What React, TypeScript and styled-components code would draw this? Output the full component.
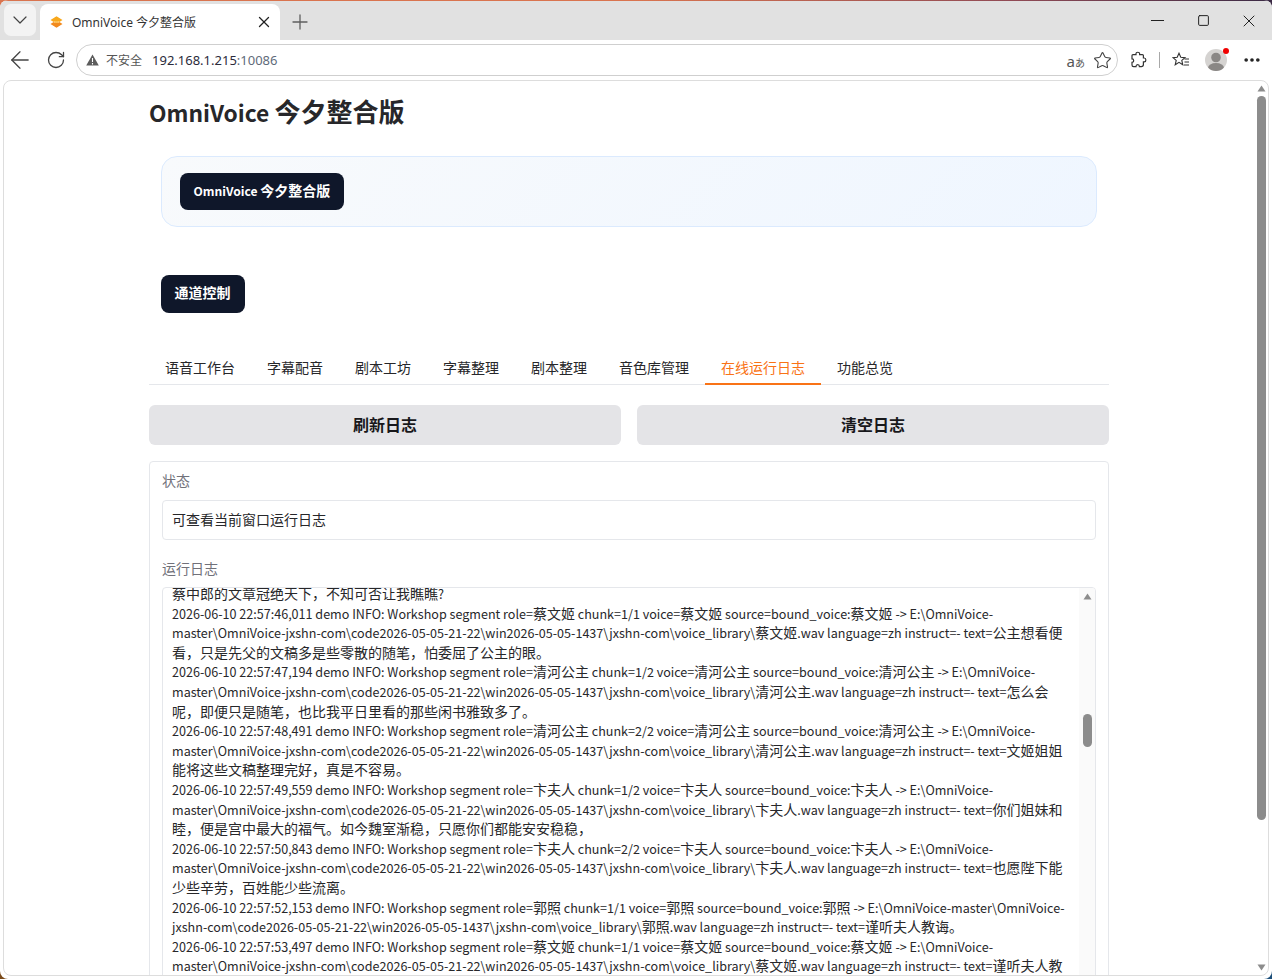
import { ReactNode } from 'react';
import { createGlobalStyle, styled } from 'styled-components';
import {
    ArrowLeft,
    ChevronDown,
    Minus,
    MoreHorizontal,
    Plus,
    RotateCw,
    Square,
    Star,
    X,
} from 'lucide-react';

const GlobalStyle = createGlobalStyle`
    html, body {
        margin: 0;
        padding: 0;
        height: 100%;
        overflow: hidden;
    }

    /* wallpaper that only shows at the rounded window corners */
    body {
        background: conic-gradient(#3b2a45 0 90deg, #1d4f7a 0 180deg, #7a4a1a 0 270deg, #d9744f 0);
    }

    * {
        box-sizing: border-box;
    }
`;

const UI_FONT = `"Noto Sans", "Noto Sans CJK SC", sans-serif`;
const PAGE_FONT = `"Noto Sans CJK SC", "Noto Sans", sans-serif`;

const Window = styled.div`
    display: flex;
    flex-direction: column;
    width: 1272px;
    height: 979px;
    overflow: hidden;
    border-radius: 8px;
    background: #ffffff;
    font-family: ${UI_FONT};
`;

const AccentLine = styled.div`
    height: 1px;
    flex: none;
    background: linear-gradient(90deg, #d9744f 0%, #d9744f 50%, #8f4a55 80%, #3b2a45 100%);
`;

const TitleBar = styled.div`
    display: flex;
    align-items: flex-end;
    flex: none;
    height: 39px;
    padding-left: 4px;
    background: #e1e1e1;
`;

const TabMenu = styled.div`
    display: flex;
    align-items: center;
    justify-content: center;
    width: 32px;
    height: 32px;
    margin-bottom: 4px;
    border-radius: 7px;
    background: #f3f3f3;
    color: #444444;
`;

const Tab = styled.div`
    display: flex;
    align-items: center;
    width: 240px;
    height: 36px;
    margin-left: 4px;
    padding: 0 7px 0 9px;
    border-radius: 8px 8px 0 0;
    background: #ffffff;
`;

const TabTitle = styled.span`
    flex: 1;
    margin-left: 8px;
    font-size: 12px;
    color: #333333;
    white-space: nowrap;
`;

const NewTab = styled.div`
    display: flex;
    align-items: center;
    justify-content: center;
    width: 40px;
    height: 36px;
    color: #5f5f5f;
`;

const WindowControls = styled.div`
    display: flex;
    margin-left: auto;
    align-self: stretch;
`;

const WindowButton = styled.div`
    display: flex;
    align-items: center;
    justify-content: center;
    width: 46px;
    color: #222222;
`;

const Toolbar = styled.div`
    display: flex;
    align-items: center;
    flex: none;
    height: 40px;
    background: #ffffff;
    color: #444444;
`;

const ToolButton = styled.div<{ $width: number }>`
    display: flex;
    align-items: center;
    justify-content: center;
    flex: none;
    width: ${(p) => p.$width}px;
    height: 32px;
`;

const AddressBar = styled.div`
    display: flex;
    align-items: center;
    flex: none;
    width: 1042px;
    height: 32px;
    margin-left: 4px;
    padding: 0 3px 0 9px;
    border: 1px solid #cfcfcf;
    border-radius: 16px;
`;

const SecurityLabel = styled.span`
    margin-left: 7px;
    font-size: 12px;
    color: #555555;
`;

const Url = styled.span`
    margin-left: 10px;
    font-size: 13px;
    color: #5f6b7a;
`;

const UrlHost = styled.span`
    color: #2b2b3b;
`;

const AddressActions = styled.div`
    display: flex;
    align-items: center;
    gap: 5px;
    margin-left: auto;
`;

const TranslateBadge = styled.span`
    display: flex;
    align-items: flex-end;
    height: 16px;
    color: #555555;
    font-size: 15px;
    line-height: 14px;
`;

const TranslateSmall = styled.span`
    font-size: 10px;
    line-height: 10px;
`;

const Divider = styled.div`
    flex: none;
    width: 1px;
    height: 16px;
    background: #a8a8a8;
`;

const Avatar = styled.div`
    position: relative;
    width: 22px;
    height: 22px;
`;

const AvatarDot = styled.span`
    position: absolute;
    top: -1px;
    right: -2px;
    width: 6px;
    height: 6px;
    border-radius: 50%;
    background: #f00000;
`;

const PageFrame = styled.div`
    display: flex;
    flex: none;
    height: 896px;
    margin: 0 3px 0 3px;
    border: 1px solid #dddddd;
    border-radius: 8px;
    overflow: hidden;
`;

const Viewport = styled.div`
    flex: 1;
    min-width: 0;
    overflow: hidden;
    font-family: ${PAGE_FONT};
`;

const Container = styled.main`
    width: 960px;
    margin: 0 auto;
`;

// the page's latin font is narrower than the latin glyphs of Noto Sans CJK
const Latin = styled.span<{ $scale: number }>`
    font-size: ${(p) => p.$scale}em;
    line-height: 1;
`;

const Heading = styled.h1`
    margin: 0;
    padding-top: 11px;
    height: 65px;
    font-size: 26px;
    line-height: 38px;
    font-weight: 600;
    color: #27272a;
`;

const HeroCard = styled.section`
    height: 71px;
    margin: 10px 12px 0;
    padding: 16px 18px;
    border: 1px solid #dbeafe;
    border-radius: 16px;
    background: linear-gradient(135deg, #f8fafc 0%, #eff6ff 100%);
`;

const DarkButton = styled.button<{ $height: number }>`
    display: block;
    height: ${(p) => p.$height}px;
    padding: 0 14px 3px 13.5px;
    border: 0;
    border-radius: 8px;
    background: #0f172a;
    color: #ffffff;
    font-family: ${PAGE_FONT};
    font-size: 14px;
    font-weight: 600;
`;

const ControlRow = styled.div`
    margin: 48px 12px 0;

    ${DarkButton} {
        padding-bottom: 5px;
    }
`;

const TabList = styled.nav`
    display: flex;
    height: 34px;
    margin-top: 38px;
    border-bottom: 1px solid #e5e7eb;
`;

const PageTab = styled.div<{ $active?: boolean }>`
    height: 34px;
    padding: 0 16px;
    font-size: 14px;
    line-height: 32px;
    white-space: nowrap;
    color: ${(p) => (p.$active ? '#f97316' : '#27272a')};
    border-bottom: 2px solid ${(p) => (p.$active ? '#f97316' : 'transparent')};
`;

const ActionRow = styled.div`
    display: grid;
    grid-template-columns: 1fr 1fr;
    gap: 16px;
    margin-top: 20px;
`;

const ActionButton = styled.button`
    height: 40px;
    padding: 0 0 2px;
    border: 0;
    border-radius: 6px;
    background: #e4e4e7;
    color: #18181b;
    font-family: ${PAGE_FONT};
    font-size: 16px;
    font-weight: 600;
`;

const Panel = styled.section`
    margin-top: 16px;
    padding: 0 12px;
    border: 1px solid #e5e7eb;
    border-radius: 4px;
`;

const FieldLabel = styled.div<{ $top: number }>`
    margin-top: ${(p) => p.$top}px;
    font-size: 14px;
    line-height: 20px;
    color: #71717a;
`;

const StatusBox = styled.div`
    height: 40px;
    margin-top: 10px;
    padding: 0 9px;
    border: 1px solid #e5e7eb;
    border-radius: 4px;
    font-size: 14px;
    line-height: 36px;
    color: #27272a;
`;

const LogBox = styled.div`
    display: flex;
    height: 460px;
    margin-top: 9px;
    border: 1px solid #e5e7eb;
    border-radius: 4px;
    overflow: hidden;
`;

const LogText = styled.div`
    flex: 1;
    min-width: 0;
    margin-top: -4px;
    padding: 0 9px;
    font-size: 14px;
    line-height: 19.6px;
    color: #27272a;
    white-space: pre-wrap;
`;

const LogScrollbar = styled.div`
    display: flex;
    flex-direction: column;
    align-items: center;
    flex: none;
    width: 16px;
    padding-top: 5px;
    background: #fafafa;
`;

const LogThumb = styled.div`
    width: 9px;
    height: 33px;
    margin-top: 114px;
    border-radius: 5px;
    background: #8c8c8c;
`;

const PageScrollbar = styled.div`
    display: flex;
    flex-direction: column;
    align-items: center;
    flex: none;
    width: 14px;
    padding-top: 4px;
`;

const PageThumb = styled.div`
    width: 9px;
    height: 724px;
    margin-top: 4px;
    border-radius: 5px;
    background: #8c8c8c;
`;

const BottomArrow = styled.div`
    margin-top: auto;
    margin-bottom: 4px;
`;

const Arrow = ({ down }: { down?: boolean }) => (
    <svg width="9" height="7" viewBox="0 0 9 7" style={{ display: 'block' }}>
        <path d={down ? 'M0.5 0.5H8.5L4.5 6.5Z' : 'M4.5 0.5L8.5 6.5H0.5Z'} fill="#8c8c8c" />
    </svg>
);

const Logo = () => (
    <svg width="15" height="14" viewBox="0 0 15 14" fill="none">
        <path d="M1.5 5L7.5 1.3L13.5 5L10.4 6.9C9.2 5.6 5.8 5.6 4.6 6.9Z" fill="#f8a81c" />
        <path d="M1.5 9L7.5 12.7L13.5 9L10.4 7.1C9.2 8.4 5.8 8.4 4.6 7.1Z" fill="#f28a1e" />
        <path d="M5.4 7H9.6" stroke="#f8a81c" strokeWidth="1.4" />
    </svg>
);

const WarningIcon = () => (
    <svg width="13" height="12" viewBox="0 0 13 12">
        <path d="M6.5 0.4L12.8 11.6H0.2Z" fill="#5c5c5c" />
        <path d="M6.5 4V8M6.5 9V10.4" stroke="#ffffff" strokeWidth="1.1" />
    </svg>
);

const ExtensionIcon = () => (
    <svg width="18" height="18" viewBox="1 0 18 18" fill="none" stroke="#333333" strokeWidth="1.2">
        <path d="M7 2.6C7 0.8 10.6 0.8 10.6 2.6V3.6H13.4C14 3.6 14.4 4 14.4 4.6V7H15.2C17.4 7 17.4 10.8 15.2 10.8H14.4V13.6C14.4 15 13.4 15.6 12.4 15.6H10.4C10.4 13 7 13 7 15.6H4.6C3.6 15.6 3 15 3 14V11.4C5.2 11.4 5.2 7.8 3 7.8V4.6C3 4 3.4 3.6 4 3.6H7Z" />
    </svg>
);

const FavoritesIcon = () => (
    <svg width="18" height="16" viewBox="0 0 18 16" fill="none" stroke="#333333" strokeWidth="1.1">
        <path d="M7 1.2L8.8 5.2L13 5.6L9.8 8.4L10.8 12.8L7 10.4L3.2 12.8L4.2 8.4L1 5.6L5.2 5.2Z" />
        <path d="M12.5 7H17M12.5 10H17M12 13H17" />
    </svg>
);

const AvatarIcon = () => (
    <svg width="22" height="22" viewBox="0 0 22 22">
        <defs>
            <clipPath id="avatar-clip">
                <circle cx="11" cy="11" r="11" />
            </clipPath>
        </defs>
        <circle cx="11" cy="11" r="11" fill="#d5d3d1" />
        <g clipPath="url(#avatar-clip)" fill="#8a8785">
            <circle cx="11" cy="8.5" r="4.8" />
            <ellipse cx="11" cy="19" rx="8" ry="5" />
        </g>
    </svg>
);

const PAGE_TABS = ['语音工作台', '字幕配音', '剧本工坊', '字幕整理', '剧本整理', '音色库管理', '在线运行日志', '功能总览'];

const LIB = 'E:\\OmniVoice-master\\OmniVoice-jxshn-com\\code2026-05-05-21-22\\win2026-05-05-1437\\jxshn-com\\voice_library\\';

const entry = (time: string, role: string, chunk: string, text: string) =>
    `2026-06-10 22:57:${time} demo INFO: Workshop segment role=${role} chunk=${chunk} voice=${role} source=bound_voice:${role} -> ${LIB}${role}.wav language=zh instruct=- text=${text}`;

const LOG_LINES = [
    '蔡中郎的文章冠绝天下，不知可否让我瞧瞧?',
    entry('46,011', '蔡文姬', '1/1', '公主想看便看，只是先父的文稿多是些零散的随笔，怕委屈了公主的眼。'),
    entry('47,194', '清河公主', '1/2', '怎么会呢，即便只是随笔，也比我平日里看的那些闲书雅致多了。'),
    entry('48,491', '清河公主', '2/2', '文姬姐姐能将这些文稿整理完好，真是不容易。'),
    entry('49,559', '卞夫人', '1/2', '你们姐妹和睦，便是宫中最大的福气。如今魏室渐稳，只愿你们都能安安稳稳，'),
    entry('50,843', '卞夫人', '2/2', '也愿陛下能少些辛劳，百姓能少些流离。'),
    entry('52,153', '郭照', '1/1', '谨听夫人教诲。'),
    entry('53,497', '蔡文姬', '1/1', '谨听夫人教诲。'),
];

// splits a string so that only its latin runs get the narrower size
const Mixed = ({ text, scale }: { text: string; scale: number }) => (
    <>
        {text.split(/([\x00-\x7f]+)/).map((part, i) =>
            i % 2 === 1 ? (
                <Latin key={i} $scale={scale}>
                    {part}
                </Latin>
            ) : (
                part
            ),
        )}
    </>
);

const Tool = ({ width, children }: { width: number; children: ReactNode }) => (
    <ToolButton $width={width}>{children}</ToolButton>
);

const BrowserChrome = () => (
    <>
        <AccentLine />
        <TitleBar>
            <TabMenu>
                <ChevronDown size={24} strokeWidth={1.2} absoluteStrokeWidth />
            </TabMenu>
            <Tab>
                <Logo />
                <TabTitle>OmniVoice 今夕整合版</TabTitle>
                <X size={18} strokeWidth={1.3} absoluteStrokeWidth color="#222222" />
            </Tab>
            <NewTab>
                <Plus size={24} strokeWidth={1.3} absoluteStrokeWidth />
            </NewTab>
            <WindowControls>
                <WindowButton>
                    <Minus size={21} strokeWidth={1} absoluteStrokeWidth />
                </WindowButton>
                <WindowButton>
                    <Square size={13} strokeWidth={1} absoluteStrokeWidth />
                </WindowButton>
                <WindowButton>
                    <X size={20} strokeWidth={1} absoluteStrokeWidth />
                </WindowButton>
            </WindowControls>
        </TitleBar>
        <Toolbar>
            <Tool width={40}>
                <ArrowLeft size={28} strokeWidth={1.3} absoluteStrokeWidth />
            </Tool>
            <Tool width={32}>
                <RotateCw size={20} strokeWidth={1.3} absoluteStrokeWidth />
            </Tool>
            <AddressBar>
                <WarningIcon />
                <SecurityLabel>不安全</SecurityLabel>
                <Url>
                    <UrlHost>192.168.1.215</UrlHost>:10086
                </Url>
                <AddressActions>
                    <TranslateBadge>
                        a<TranslateSmall>あ</TranslateSmall>
                    </TranslateBadge>
                    <Tool width={24}>
                        <Star size={19} strokeWidth={1.1} absoluteStrokeWidth />
                    </Tool>
                </AddressActions>
            </AddressBar>
            <Tool width={41}>
                <ExtensionIcon />
            </Tool>
            <Divider />
            <Tool width={41}>
                <FavoritesIcon />
            </Tool>
            <Tool width={30}>
                <Avatar>
                    <AvatarIcon />
                    <AvatarDot />
                </Avatar>
            </Tool>
            <Tool width={42}>
                <MoreHorizontal size={20} strokeWidth={2} absoluteStrokeWidth color="#222222" />
            </Tool>
        </Toolbar>
    </>
);

export default function App() {
    return (
        <>
            <GlobalStyle />
            <Window>
                <BrowserChrome />
                <PageFrame>
                    <Viewport>
                        <Container>
                            <Heading>
                                <Mixed text="OmniVoice 今夕整合版" scale={0.875} />
                            </Heading>
                            <HeroCard>
                                <DarkButton $height={37}>
                                    <Mixed text="OmniVoice 今夕整合版" scale={0.865} />
                                </DarkButton>
                            </HeroCard>
                            <ControlRow>
                                <DarkButton $height={38}>通道控制</DarkButton>
                            </ControlRow>
                            <TabList>
                                {PAGE_TABS.map((tab) => (
                                    <PageTab key={tab} $active={tab === '在线运行日志'}>
                                        {tab}
                                    </PageTab>
                                ))}
                            </TabList>
                            <ActionRow>
                                <ActionButton>刷新日志</ActionButton>
                                <ActionButton>清空日志</ActionButton>
                            </ActionRow>
                            <Panel>
                                <FieldLabel $top={8}>状态</FieldLabel>
                                <StatusBox>可查看当前窗口运行日志</StatusBox>
                                <FieldLabel $top={18}>运行日志</FieldLabel>
                                <LogBox>
                                    <LogText>
                                        <Mixed text={LOG_LINES.join('\n')} scale={0.898} />
                                    </LogText>
                                    <LogScrollbar>
                                        <Arrow />
                                        <LogThumb />
                                    </LogScrollbar>
                                </LogBox>
                            </Panel>
                        </Container>
                    </Viewport>
                    <PageScrollbar>
                        <Arrow />
                        <PageThumb />
                        <BottomArrow>
                            <Arrow down />
                        </BottomArrow>
                    </PageScrollbar>
                </PageFrame>
            </Window>
        </>
    );
}
